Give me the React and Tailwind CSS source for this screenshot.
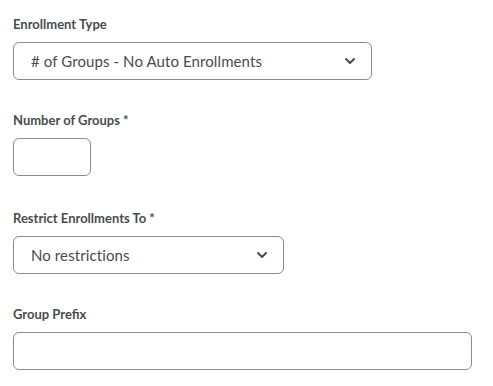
import React from "react";

const font = { fontFamily: "Lato, 'Noto Sans', sans-serif" };

function Chevron() {
  return (
    <svg width="12" height="8" viewBox="0 0 12 8" className="shrink-0">
      <path d="M2 2 L6 6 L10 2" fill="none" stroke="#494c4e" strokeWidth="2" strokeLinecap="round" strokeLinejoin="round" />
    </svg>
  );
}

function Label({ children }) {
  return (
    <div className="h-[18px] leading-[18px] text-[13px] font-bold text-[#494c4e] mb-[9px]">{children}</div>
  );
}

function Select({ width, value }) {
  return (
    <div
      className="h-[38px] rounded-[6px] border border-[#8a8c8e] bg-white flex items-center justify-between pl-[17px] pr-[15px]"
      style={{ width }}
    >
      <span className="text-[15px] text-[#494c4e] tracking-[0.1px]">{value}</span>
      <Chevron />
    </div>
  );
}

function Input({ width }) {
  return (
    <div
      className="h-[38px] rounded-[6px] border border-[#8a8c8e] bg-white"
      style={{ width }}
    />
  );
}

export default function App() {
  return (
    <div className="w-[493px] h-[386px] bg-white pl-[13px] pt-[15px]" style={font}>
      <div className="mb-[31px]">
        <Label>Enrollment Type</Label>
        <Select width={359} value="# of Groups - No Auto Enrollments" />
      </div>
      <div className="mb-[33px]">
        <Label>Number of Groups *</Label>
        <Input width={78} />
      </div>
      <div className="mb-[31px]">
        <Label>Restrict Enrollments To *</Label>
        <Select width={271} value="No restrictions" />
      </div>
      <div>
        <Label>Group Prefix</Label>
        <Input width={459} />
      </div>
    </div>
  );
}
